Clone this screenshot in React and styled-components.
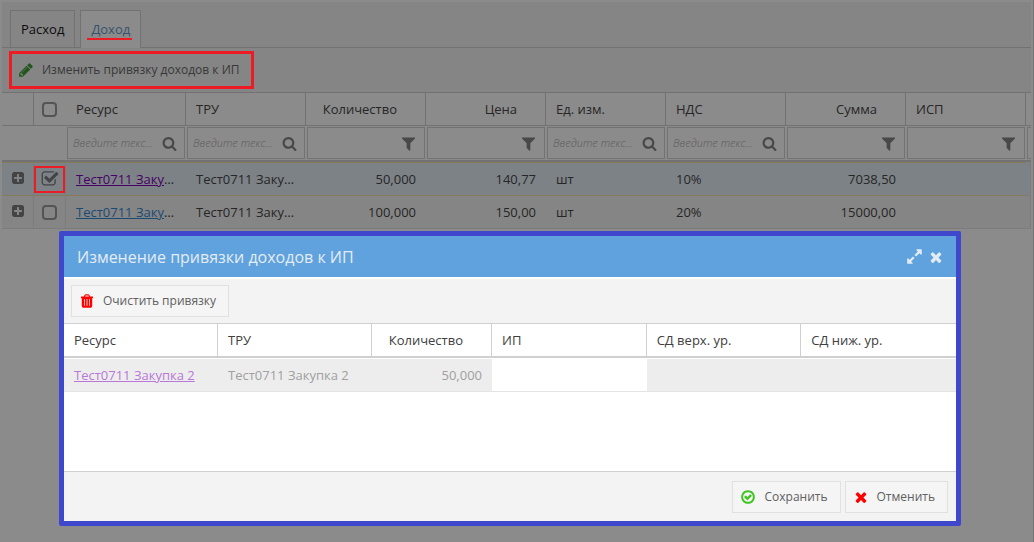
import React from "react";
import styled, { createGlobalStyle, css } from "styled-components";

const GlobalStyle = createGlobalStyle`
  *, *::before, *::after { box-sizing: border-box; }
  body {
    margin: 0;
    background: #8b8b8b;
    font-family: "Open Sans", "Noto Sans", sans-serif;
    font-size: 13px;
    line-height: 20px;
    color: #262626;
  }
  button, input { font: inherit; color: inherit; margin: 0; padding: 0; }
`;

/* ---------- icons ---------- */

const ICONS = {
  pencil:
    "M491 1536l91-91-235-235-91 91v107h128v128h107zm523-928q0-22-22-22-10 0-17 7l-542 542q-7 7-7 17 0 22 22 22 10 0 17-7l542-542q7-7 7-17zm-54-192l416 416-832 832h-416v-416zm683 96q0 53-37 90l-166 166-416-416 166-165q36-38 90-38 53 0 91 38l235 234q37 39 37 91z",
  search:
    "M1216 832q0-185-131.5-316.5t-316.5-131.5-316.5 131.5-131.5 316.5 131.5 316.5 316.5 131.5 316.5-131.5 131.5-316.5zm512 832q0 52-38 90t-90 38q-54 0-90-38l-343-342q-179 124-399 124-143 0-273.5-55.5t-225-150-150-225-55.5-273.5 55.5-273.5 150-225 225-150 273.5-55.5 273.5 55.5 225 150 150 225 55.5 273.5q0 220-124 399l343 343q37 37 37 90z",
  filter:
    "M1595 295q17 41-14 70l-493 493v742q0 42-39 59-13 5-25 5-27 0-45-19l-256-256q-19-19-19-45v-486l-493-493q-31-29-14-70 17-39 59-39h1280q42 0 59 39z",
  plus:
    "M1408 960v-128q0-26-19-45t-45-19h-320v-320q0-26-19-45t-45-19h-128q-26 0-45 19t-19 45v320h-320q-26 0-45 19t-19 45v128q0 26 19 45t45 19h320v320q0 26 19 45t45 19h128q26 0 45-19t19-45v-320h320q26 0 45-19t19-45zm256-544v960q0 119-84.5 203.5t-203.5 84.5h-960q-119 0-203.5-84.5t-84.5-203.5v-960q0-119 84.5-203.5t203.5-84.5h960q119 0 203.5 84.5t84.5 203.5z",
  checked:
    "M1472 930v318q0 119-84.5 203.5t-203.5 84.5h-832q-119 0-203.5-84.5t-84.5-203.5v-832q0-119 84.5-203.5t203.5-84.5h832q63 0 117 25 15 7 18 23 3 17-9 29l-49 49q-10 10-23 10-3 0-9-2-23-6-45-6h-832q-66 0-113 47t-47 113v832q0 66 47 113t113 47h832q66 0 113-47t47-113v-254q0-13 9-22l64-64q10-10 23-10 6 0 12 3 20 8 20 29zm231-489l-814 814q-24 24-57 24t-57-24l-430-430q-24-24-24-57t24-57l110-110q24-24 57-24t57 24l263 263 647-647q24-24 57-24t57 24l110 110q24 24 24 57t-24 57z",
  expand:
    "M883 1056q0 13-10 23l-332 332 144 144q19 19 19 45t-19 45-45 19h-448q-26 0-45-19t-19-45v-448q0-26 19-45t45-19 45 19l144 144 332-332q10-10 23-10t23 10l114 114q10 10 10 23zm781-864v448q0 26-19 45t-45 19-45-19l-144-144-332 332q-10 10-23 10t-23-10l-114-114q-10-10-10-23t10-23l332-332-144-144q-19-19-19-45t19-45 45-19h448q26 0 45 19t19 45z",
  times:
    "M1490 1322q0 40-28 68l-136 136q-28 28-68 28t-68-28l-294-294-294 294q-28 28-68 28t-68-28l-136-136q-28-28-28-68t28-68l294-294-294-294q-28-28-28-68t28-68l136-136q28-28 68-28t68 28l294 294 294-294q28-28 68-28t68 28l136 136q28 28 28 68t-28 68l-294 294 294 294q28 28 28 68z",
  confirm:
    "M1299 813l-422 422q-19 19-45 19t-45-19l-294-294q-19-19-19-45t19-45l102-102q19-19 45-19t45 19l147 147 275-275q19-19 45-19t45 19l102 102q19 19 19 45t-19 45zm141 83q0-148-73-273t-198-198-273-73-273 73-198 198-73 273 73 273 198 198 273 73 273-73 198-198 73-273zm224 0q0 209-103 385.5t-279.5 279.5-385.5 103-385.5-103-279.5-279.5-103-385.5 103-385.5 279.5-279.5 385.5-103 385.5 103 279.5 279.5 103 385.5z",
};

const Svg = styled.svg`
  display: block;
  flex: none;
  fill: currentColor;
`;

const Icon = ({ name, size = 16, color }) => (
  <Svg width={size} height={size} viewBox="0 0 1792 1792" color={color} aria-hidden="true">
    <path d={ICONS[name]} />
  </Svg>
);

/* Same glyphs without the side margins, for buttons with a caption. */
const ButtonIcon = ({ name, color }) => (
  <Svg width="14" height="16" viewBox="128 0 1536 1792" color={color} aria-hidden="true">
    <path d={ICONS[name]} />
  </Svg>
);

const TrashIcon = () => (
  <Svg width="14" height="16" viewBox="0 0 14 16" color="#fe0000" aria-hidden="true">
    <path
      fillRule="evenodd"
      d="M1 3.500h2.800l.8-1.500Q5 1.200 5.800 1.200h2.400q.8 0 1.200.8l.8 1.500H13v1.700h-.8V13q0 1.700-1.500 1.700H3.300q-1.500 0-1.500-1.700V5.200H1zM5 3.500h4l-.5-1.100h-3z"
    />
    <path d="M4 6h1v6.800H4zM6.500 6h1v6.800h-1zM9 6h1v6.800H9z" fill="#ffb4b4" />
  </Svg>
);

/* ---------- page ---------- */

const Page = styled.div`
  position: relative;
  min-height: 100vh;
  padding: 2px 2px 0;
  background: #8b8b8b;
  border-right: 1px solid #727272;
`;

const TabBar = styled.nav`
  display: flex;
  align-items: flex-end;
  gap: 5px;
  height: 46px;
  padding: 0 8px;
  background: #858585;
  border-bottom: 1px solid #727272;
`;

const Tab = styled.button`
  position: relative;
  height: 37px;
  padding: 0 10px;
  border: 1px solid #727272;
  border-bottom: 0;
  background: ${(p) => (p.$active ? "#8b8b8b" : "#858585")};
  color: ${(p) => (p.$active ? "#35536f" : "#0c0c0c")};
  ${(p) =>
    p.$active &&
    css`
      height: 38px;
      padding-bottom: 1px;
      margin-bottom: -1px;
      &::after {
        content: "";
        position: absolute;
        left: 6px;
        right: 8px;
        bottom: 8px;
        height: 2px;
        background: #ed1c24;
      }
    `}
`;

const Toolbar = styled.div`
  display: flex;
  align-items: center;
  height: 44px;
  padding: 0 7px;
  background: #858585;
`;

const EditButton = styled.button`
  display: flex;
  align-items: center;
  gap: 8px;
  height: 38px;
  padding: 0 11px 0 6px;
  border: 3px solid #ed1c24;
  background: none;
  font-size: 12px;
  color: #383838;
`;

/* ---------- data grid ---------- */

const Grid = styled.table`
  width: 100%;
  table-layout: fixed;
  border-collapse: separate;
  border-spacing: 0;
`;

const Col = styled.col`
  width: ${(p) => (p.$w ? `${p.$w}px` : "auto")};
`;

const HeadCell = styled.th`
  height: 34px;
  padding: 0 ${(p) => (p.$num ? 28 : 10)}px 0 10px;
  border-top: 1px solid #727272;
  border-bottom: 1px solid #727272;
  border-right: ${(p) => (p.$open ? "0" : "1px solid #727272")};
  font-weight: 400;
  text-align: ${(p) => (p.$num ? "right" : "left")};
  white-space: nowrap;
`;

const HeadToolCell = styled(HeadCell)`
  padding: 0;
`;

const FilterCell = styled.td`
  height: 36px;
  padding: 1px;
  border-bottom: 2px solid #727272;
`;

const LastFilterCell = styled(FilterCell)`
  padding-right: 0;
`;

const FilterBox = styled.label`
  display: flex;
  align-items: center;
  height: 32px;
  padding: 0 7px 0 5px;
  border: 1px solid #727272;
  color: #484848;
  overflow: hidden;
`;

const FilterEdge = styled.div`
  height: 32px;
  border: 1px solid #727272;
  border-right: 0;
`;

const FilterInput = styled.input`
  flex: 1;
  min-width: 0;
  width: 0;
  border: 0;
  outline: 0;
  background: none;
  font-size: 11px;
  &::placeholder {
    color: #5c5c5c;
    font-style: italic;
    font-weight: 300;
    opacity: 1;
  }
`;

const Row = styled.tr`
  background: ${(p) => (p.$selected ? "#7d8286" : "#858585")};
`;

const Cell = styled.td`
  height: ${(p) => (p.$selected ? 34 : 33)}px;
  padding: 0 10px;
  border-top: ${(p) => (p.$selected ? "1px solid #857b5c" : "0")};
  border-bottom: 1px solid ${(p) => (p.$selected ? "#857b5c" : "#7c7c7c")};
  text-align: ${(p) => (p.$num ? "right" : "left")};
  white-space: nowrap;
  overflow: hidden;
  text-overflow: ellipsis;
`;

const ToolCell = styled(Cell)`
  padding: 0;
  border-right: 1px solid #7c7c7c;
`;

const CellLink = styled.a`
  color: ${(p) => (p.$visited ? "#470166" : "#1b4a73")};
  text-decoration: underline;
`;

const ExpandButton = styled.button`
  display: grid;
  place-items: center;
  width: 31px;
  height: 28px;
  padding-bottom: 2px;
  border: 0;
  background: none;
  color: #444;
`;

const CheckLabel = styled.label`
  display: grid;
  place-items: center;
  width: 31px;
  height: 27px;
  color: #444;
  outline: ${(p) => (p.$marked ? "2px solid #ed1c24" : "0")};
  outline-offset: -2px;
`;

const CheckInput = styled.input`
  grid-area: 1 / 1;
  appearance: none;
  width: 15px;
  height: 15px;
  border: 2px solid #545454;
  border-radius: 4px;
  &:checked { border-color: transparent; }
  & + svg { grid-area: 1 / 1; display: none; }
  &:checked + svg { display: block; }
`;

const Check = ({ label, checked, marked }) => (
  <CheckLabel $marked={marked}>
    <CheckInput type="checkbox" aria-label={label} defaultChecked={checked} />
    <Icon name="checked" size={18} />
  </CheckLabel>
);

/* ---------- dialog ---------- */

const Layer = styled.div`
  position: absolute;
  inset: 0;
  padding: 231px 72px 16px 59px;
`;

const Dialog = styled.section`
  display: flex;
  flex-direction: column;
  border: 5px solid #3f48cc;
  border-radius: 2px;
  background: #fff;
`;

const TitleBar = styled.header`
  display: flex;
  align-items: center;
  gap: 5px;
  height: 41px;
  padding: 0 12px 0 13px;
  background: #5fa2dd;
  color: #e4ecf3;
`;

const Title = styled.h1`
  flex: 1;
  margin: 0;
  font-size: 16px;
  font-weight: 400;
  line-height: 24px;
`;

const TitleButton = styled.button`
  border: 0;
  background: none;
`;

const DialogBar = styled.div`
  display: flex;
  align-items: center;
  height: 44px;
  margin-top: 2px;
  padding: 0 7px;
  background: #f3f3f3;
`;

const Button = styled.button`
  display: flex;
  align-items: center;
  gap: 9px;
  height: 32px;
  padding: 0 12px 0 8px;
  border: 1px solid #e1e1e1;
  background: #f5f5f5;
  font-size: 12px;
  color: #606060;
`;

const DialogBody = styled.div`
  min-height: 148px;
`;

const DialogHead = styled(HeadCell)`
  height: 35px;
  border-top: 1px solid #d0d0d0;
  border-bottom: 2px solid #d0d0d0;
  border-right: ${(p) => (p.$open ? "0" : "1px solid #d0d0d0")};
  color: #404040;
`;

const DialogCell = styled(Cell)`
  height: 34px;
  border-top: 1px solid #fff;
  border-bottom: 1px solid #e4e4e4;
  background: ${(p) => (p.$editable ? "#fff" : "#ededed")};
  color: #a0a0a0;
`;

const DialogLink = styled.a`
  color: #b978d8;
  text-decoration: underline;
`;

const Footer = styled.footer`
  display: flex;
  align-items: center;
  justify-content: flex-end;
  gap: 4px;
  height: 50px;
  padding: 0 8px;
  border-top: 1px solid #d0d0d0;
  background: #f3f3f3;
`;

/* ---------- data ---------- */

const COLUMNS = [
  { title: "Ресурс" },
  { title: "ТРУ" },
  { title: "Количество", num: true },
  { title: "Цена", num: true },
  { title: "Ед. изм." },
  { title: "НДС" },
  { title: "Сумма", num: true },
  { title: "ИСП", funnel: true },
];

const ROWS = [
  { selected: true, values: ["Тест0711 Закупка 2", "Тест0711 Закупка 2", "50,000", "140,77", "шт", "10%", "7038,50", ""] },
  { selected: false, values: ["Тест0711 Закупка 1", "Тест0711 Закупка 1", "100,000", "150,00", "шт", "20%", "15000,00", ""] },
];

const DIALOG_COLUMNS = [
  { title: "Ресурс", width: 154 },
  { title: "ТРУ", width: 154 },
  { title: "Количество", num: true, width: 120 },
  { title: "ИП", editable: true },
  { title: "СД верх. ур." },
  { title: "СД ниж. ур." },
];

const DIALOG_VALUES = ["Тест0711 Закупка 2", "Тест0711 Закупка 2", "50,000", "", "", ""];

const IncomeGrid = () => (
  <Grid>
    <colgroup>
      <Col $w={32} />
      <Col $w={32} />
      {COLUMNS.map((c) => (
        <Col key={c.title} $w={120} />
      ))}
      <Col />
    </colgroup>
    <thead>
      <tr>
        <HeadToolCell />
        <HeadToolCell $open>
          <Check label="Выбрать все" />
        </HeadToolCell>
        {COLUMNS.map((c) => (
          <HeadCell key={c.title} $num={c.num}>
            {c.title}
          </HeadCell>
        ))}
        <HeadToolCell $open />
      </tr>
      <tr>
        <FilterCell />
        <FilterCell />
        {COLUMNS.map((c) => {
          const funnel = c.num || c.funnel;
          return (
            <FilterCell key={c.title}>
              <FilterBox>
                <FilterInput
                  type="text"
                  aria-label={`Фильтр: ${c.title}`}
                  placeholder={funnel ? "" : "Введите текс..."}
                />
                <Icon name={funnel ? "filter" : "search"} size={funnel ? 17 : 15} />
              </FilterBox>
            </FilterCell>
          );
        })}
        <LastFilterCell>
          <FilterEdge />
        </LastFilterCell>
      </tr>
    </thead>
    <tbody>
      {ROWS.map((row, i) => (
        <Row key={i} $selected={row.selected}>
          <ToolCell $selected={row.selected}>
            <ExpandButton type="button" aria-label="Развернуть строку">
              <Icon name="plus" size={14} />
            </ExpandButton>
          </ToolCell>
          <ToolCell $selected={row.selected}>
            <Check label="Выбрать строку" checked={row.selected} marked={row.selected} />
          </ToolCell>
          {row.values.map((value, j) => (
            <Cell key={j} $num={COLUMNS[j].num} $selected={row.selected}>
              {j === 0 ? (
                <CellLink href="#resource" $visited={row.selected}>
                  {value}
                </CellLink>
              ) : (
                value
              )}
            </Cell>
          ))}
          <ToolCell as={Cell} $selected={row.selected} />
        </Row>
      ))}
    </tbody>
  </Grid>
);

const BindingDialog = () => (
  <Layer>
    <Dialog role="dialog" aria-labelledby="dialog-title">
      <TitleBar>
        <Title id="dialog-title">Изменение привязки доходов к ИП</Title>
        <TitleButton type="button" aria-label="Развернуть">
          <Icon name="expand" size={17} />
        </TitleButton>
        <TitleButton type="button" aria-label="Закрыть">
          <Icon name="times" size={16} />
        </TitleButton>
      </TitleBar>
      <DialogBar>
        <Button type="button">
          <TrashIcon />
          Очистить привязку
        </Button>
      </DialogBar>
      <DialogBody>
        <Grid>
          <colgroup>
            {DIALOG_COLUMNS.map((c) => (
              <Col key={c.title} $w={c.width} />
            ))}
          </colgroup>
          <thead>
            <tr>
              {DIALOG_COLUMNS.map((c, i) => (
                <DialogHead key={c.title} $num={c.num} $open={i === 5}>
                  {c.title}
                </DialogHead>
              ))}
            </tr>
          </thead>
          <tbody>
            <tr>
              {DIALOG_VALUES.map((value, i) => (
                <DialogCell key={i} $num={DIALOG_COLUMNS[i].num} $editable={DIALOG_COLUMNS[i].editable}>
                  {i === 0 ? <DialogLink href="#resource">{value}</DialogLink> : value}
                </DialogCell>
              ))}
            </tr>
          </tbody>
        </Grid>
      </DialogBody>
      <Footer>
        <Button type="button">
          <ButtonIcon name="confirm" color="#3fc422" />
          Сохранить
        </Button>
        <Button type="button">
          <ButtonIcon name="times" color="#fe0000" />
          Отменить
        </Button>
      </Footer>
    </Dialog>
  </Layer>
);

export default function App() {
  return (
    <>
      <GlobalStyle />
      <Page>
        <TabBar>
          <Tab type="button">Расход</Tab>
          <Tab type="button" $active>
            Доход
          </Tab>
        </TabBar>
        <Toolbar>
          <EditButton type="button">
            <Icon name="pencil" color="#22561c" />
            Изменить привязку доходов к ИП
          </EditButton>
        </Toolbar>
        <IncomeGrid />
        <BindingDialog />
      </Page>
    </>
  );
}
